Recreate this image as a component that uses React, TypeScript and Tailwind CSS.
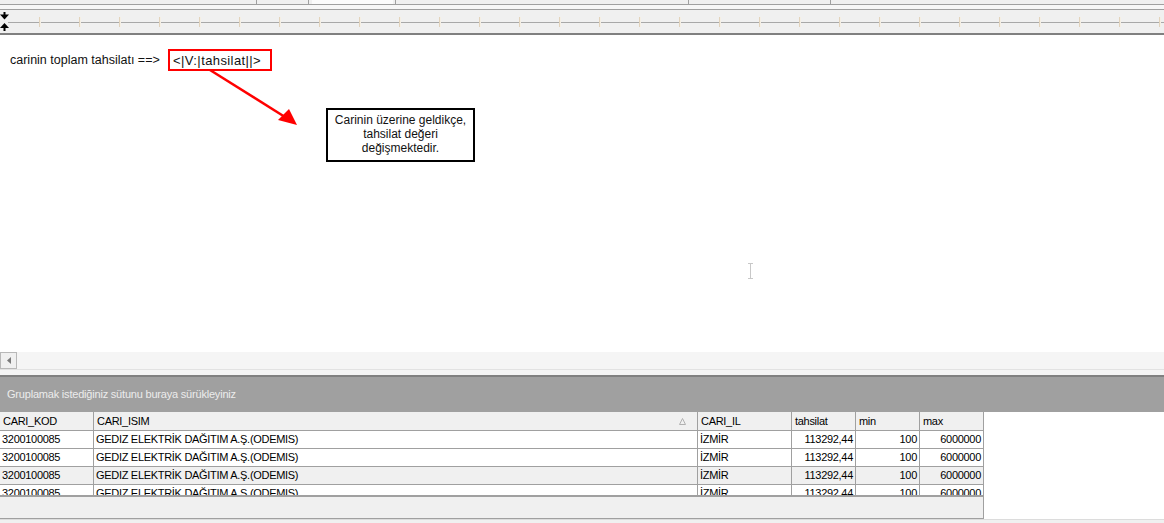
const columns = [
  { label: "CARI_KOD", width: "w-[94px]", right: false },
  { label: "CARI_ISIM", width: "w-[604px]", right: false },
  { label: "CARI_IL", width: "w-[94px]", right: false },
  { label: "tahsilat", width: "w-[64px]", right: true },
  { label: "min", width: "w-[64px]", right: true },
  { label: "max", width: "w-[64px]", right: true },
];

const rows = [
  ["3200100085", "GEDIZ ELEKTRİK DAĞITIM A.Ş.(ODEMIS)", "İZMİR", "113292,44", "100", "6000000"],
  ["3200100085", "GEDIZ ELEKTRİK DAĞITIM A.Ş.(ODEMIS)", "İZMİR", "113292,44", "100", "6000000"],
  ["3200100085", "GEDIZ ELEKTRİK DAĞITIM A.Ş.(ODEMIS)", "İZMİR", "113292,44", "100", "6000000"],
  ["3200100085", "GEDIZ ELEKTRİK DAĞITIM A.Ş.(ODEMIS)", "İZMİR", "113292,44", "100", "6000000"],
];

const ticks = Array.from({ length: 29 }, (_, i) => 39 + i * 40);

const Ruler = () => (
  <svg width="1164" height="23" className="block">
    <rect width="1164" height="23" fill="#f0f0f0" />
    <line x1="8" y1="12.5" x2="1164" y2="12.5" stroke="#a8a8a8" />
    {ticks.map((x) => (
      <g key={x}>
        <line x1={x + 0.5} y1="7" x2={x + 0.5} y2="17" stroke="#e2d3bc" />
        <line x1={x + 1.5} y1="7" x2={x + 1.5} y2="17" stroke="#f5efe4" />
      </g>
    ))}
    {/* collapse / expand arrows */}
    <line x1="4.5" y1="2" x2="4.5" y2="7" stroke="#000" strokeWidth="2" />
    <polygon points="0,4.5 9,4.5 4.5,9.5" fill="#000" />
    <line x1="4.5" y1="16" x2="4.5" y2="21" stroke="#000" strokeWidth="2" />
    <polygon points="0,18 9,18 4.5,13" fill="#000" />
  </svg>
);

export default function App() {
  return (
    <div className="w-[1164px] h-[523px] flex flex-col bg-white overflow-hidden font-['Liberation_Sans',Arial,sans-serif]">
      {/* tab strip */}
      <div className="h-[4px] flex bg-[#f0f0f0]">
        <div className="w-[256px]" />
        <div className="w-px bg-[#a0a0a0]" />
        <div className="w-[51px]" />
        <div className="w-px bg-[#a0a0a0]" />
        <div className="w-[3px]" />
        <div className="w-[81px] bg-[#fbfbfb]" />
        <div className="w-[2px]" />
        <div className="w-px bg-[#a0a0a0]" />
        <div className="w-[292px]" />
        <div className="w-px bg-[#a0a0a0]" />
        <div className="w-[141px]" />
        <div className="w-px bg-[#a0a0a0]" />
      </div>
      <div className="h-px bg-[#a0a0a0]" />
      <div className="h-[4px] bg-[#f7f7f7]" />
      <div className="h-px bg-[#a0a0a0]" />
      <Ruler />
      <div className="h-[2px] bg-[#808080]" />

      {/* design canvas */}
      <div className="relative h-[317px] bg-white">
        <div className="flex items-center pt-[14px] pl-[10px]">
          <span className="w-[158px] text-[12.5px] text-[#111] leading-none">carinin toplam tahsilatı ==&gt;</span>
          <div className="w-[104px] h-[22px] border-2 border-[#ff0000] flex items-center pl-[3px] text-[13px] tracking-[0.4px] text-[#111] leading-none">
            &lt;|V:|tahsilat||&gt;
          </div>
        </div>

        <svg className="absolute inset-0 pointer-events-none" width="1164" height="317">
          <line x1="210" y1="35" x2="285" y2="82" stroke="#ff0000" strokeWidth="2.5" />
          <polygon points="297,90 278,85 289,74" fill="#ff0000" />
          <g stroke="#c8c8c8" strokeWidth="1">
            <line x1="750.5" y1="229" x2="750.5" y2="243" />
            <line x1="748" y1="228.5" x2="753" y2="228.5" />
            <line x1="748" y1="243.5" x2="753" y2="243.5" />
          </g>
        </svg>

        <div className="absolute left-[326px] top-[73px] w-[149px] h-[54px] border-2 border-black bg-white flex flex-col items-center pt-[3px] text-[12px] leading-[14px] text-[#111]">
          <span>Carinin üzerine geldikçe,</span>
          <span>tahsilat değeri</span>
          <span>değişmektedir.</span>
        </div>
      </div>

      {/* horizontal scrollbar */}
      <div className="h-[17px] flex bg-[#f5f5f5]">
        <div className="w-[17px] h-[17px] border border-[#b8b8b8] bg-[#f0f0f0] flex items-center justify-center">
          <svg width="4" height="7" viewBox="0 0 4 7">
            <polygon points="4,0 0,3.5 4,7" fill="#7a7a7a" />
          </svg>
        </div>
      </div>
      <div className="h-[6px] bg-[#f4f4f4] border-t border-[#e2e2e2]" />
      <div className="h-[2px] bg-[#808080]" />

      {/* group panel */}
      <div className="h-[35px] bg-[#a0a0a0] flex items-center pl-[7px] text-[11px] tracking-[-0.2px] text-[#ececec]">
        Gruplamak istediğiniz sütunu buraya sürükleyiniz
      </div>

      {/* grid */}
      <div className="h-[107px] flex">
        <div className="w-[984px] flex flex-col text-[11px] tracking-[-0.3px] text-black">
          <div className="h-[19px] flex bg-[#f0f0f0] border-b border-[#a0a0a0]">
            {columns.map((c) => (
              <div
                key={c.label}
                className={`${c.width} flex items-center justify-between px-[3px] border-r border-[#a0a0a0]`}
              >
                <span>{c.label}</span>
                {c.label === "CARI_ISIM" && (
                  <svg width="7" height="7" viewBox="0 0 7 7" className="mr-[8px]">
                    <polygon points="3.5,0.5 6.5,6.5 0.5,6.5" fill="none" stroke="#b0b0b0" />
                  </svg>
                )}
              </div>
            ))}
          </div>
          <div className="h-[64px] overflow-hidden">
            {rows.map((r, i) => (
              <div
                key={i}
                className={`h-[18px] flex border-b border-[#a0a0a0] ${i === 2 ? "bg-[#f0f0f0]" : "bg-white"}`}
              >
                {columns.map((c, j) => (
                  <div
                    key={c.label}
                    className={`${c.width} flex items-center px-[2px] border-r border-[#a0a0a0] ${c.right ? "justify-end" : ""}`}
                  >
                    {r[j]}
                  </div>
                ))}
              </div>
            ))}
          </div>
          <div className="h-[2px] bg-[#a0a0a0]" />
          <div className="h-[22px] bg-[#f0f0f0] border-b border-r border-[#a0a0a0]" />
        </div>
        <div className="flex-1 bg-white" />
      </div>
      <div className="h-[4px] bg-[#f0f0f0] border-t border-[#dcdcdc]" />
    </div>
  );
}
